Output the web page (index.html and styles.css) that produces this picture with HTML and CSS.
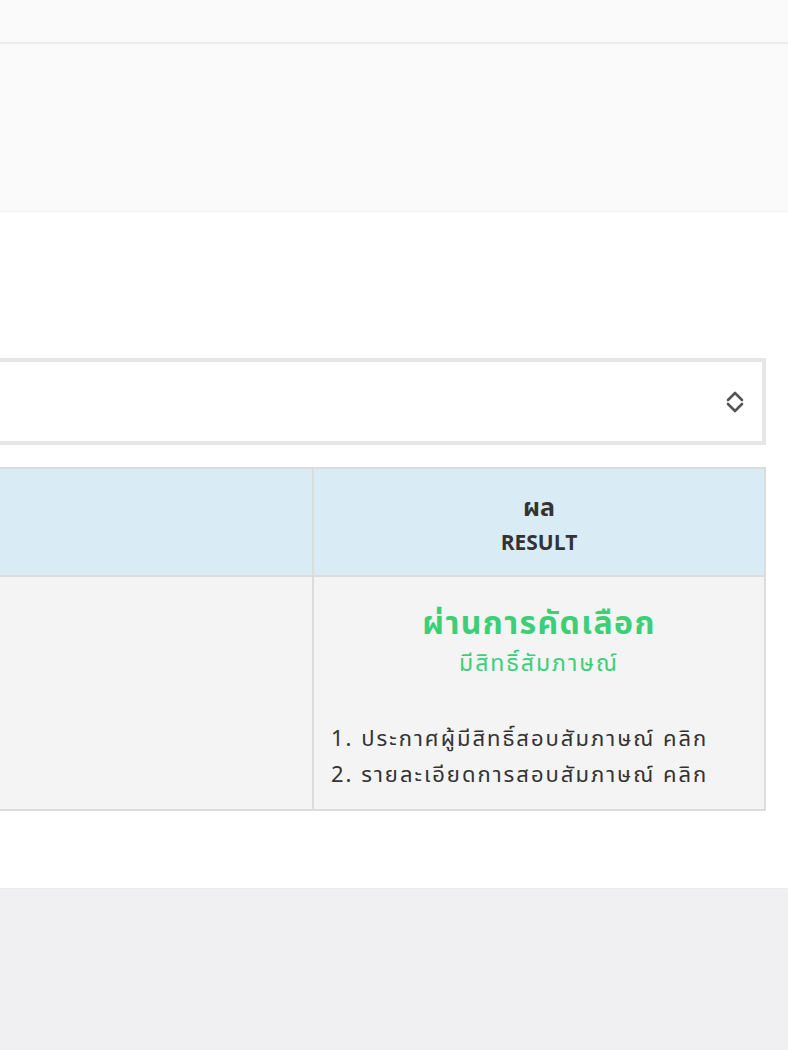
FILE: index.html
```html
<!DOCTYPE html>
<html lang="th">
<head>
<meta charset="utf-8">
<title>ผล</title>
<link rel="stylesheet" href="styles.css">
</head>
<body>
<header class="topbar"></header>
<section class="banner"></section>
<main class="content">
  <div class="select-box">
    <svg class="chevrons" width="20" height="24" viewBox="0 0 20 24" aria-hidden="true">
      <path d="M3 10 L10 3 L17 10" fill="none" stroke="#555" stroke-width="2.6" stroke-linecap="round" stroke-linejoin="round"/>
      <path d="M3 14 L10 21 L17 14" fill="none" stroke="#555" stroke-width="2.6" stroke-linecap="round" stroke-linejoin="round"/>
    </svg>
  </div>
  <table class="result-table">
    <thead>
      <tr>
        <th class="col-a"></th>
        <th class="col-b"><span class="th-main">ผล</span><span class="th-sub">RESULT</span></th>
      </tr>
    </thead>
    <tbody>
      <tr>
        <td class="col-a"></td>
        <td class="col-b">
          <div class="pass">ผ่านการคัดเลือก</div>
          <div class="pass-sub">มีสิทธิ์สัมภาษณ์</div>
          <ol class="links">
            <li>1. ประกาศผู้มีสิทธิ์สอบสัมภาษณ์ คลิก</li>
            <li>2. รายละเอียดการสอบสัมภาษณ์ คลิก</li>
          </ol>
        </td>
      </tr>
    </tbody>
  </table>
</main>
<footer class="footer"></footer>
</body>
</html>
```
FILE: styles.css
```css
* { box-sizing: border-box; }
html, body { margin: 0; padding: 0; }
body {
  background: #ffffff;
  font-family: "Noto Sans Thai", "Noto Sans", "DejaVu Sans", sans-serif;
  color: #333333;
  overflow: hidden;
  width: 788px;
}
.topbar {
  height: 44px;
  background: #fafafa;
  border-bottom: 2px solid #ececec;
}
.banner {
  height: 168px;
  background: #fafafa;
  border-bottom: 1px solid #f3f3f3;
}
.content {
  margin-left: -40px;
  width: 806px;
  padding-top: 146px;
  padding-bottom: 77px;
}
.select-box {
  height: 87px;
  border: 4px solid #e6e6e6;
  background: #ffffff;
  display: flex;
  align-items: center;
  justify-content: flex-end;
  padding-right: 17px;
}
.chevrons { display: block; }
.result-table {
  margin-top: 22px;
  width: 806px;
  border-collapse: collapse;
  border: 2px solid #dcdcdc;
}
.result-table th, .result-table td {
  border: 2px solid #dcdcdc;
  text-align: center;
  padding: 0;
}
.col-a { width: 352px; }
thead th {
  background: #d9ecf6;
  height: 108px;
  vertical-align: middle;
  padding-top: 7px !important;
}
.th-main {
  display: block;
  font-size: 25px;
  font-weight: 700;
  line-height: 36px;
  color: #333;
}
.th-sub {
  display: block;
  font-size: 21px;
  font-weight: 700;
  line-height: 36px;
  color: #333;
}
tbody td {
  background: #f4f4f4;
  height: 234px;
  vertical-align: top;
}
.pass {
  margin-top: 27px;
  font-size: 32px;
  font-weight: 700;
  line-height: 40px;
  letter-spacing: 1.4px;
  color: #3ccf78;
}
.pass-sub {
  font-size: 23px;
  line-height: 40px;
  letter-spacing: 2px;
  color: #3ccf78;
}
.links {
  list-style: none;
  margin: 38px 0 0 0;
  padding: 0 0 0 17px;
  text-align: left;
  font-size: 22px;
  line-height: 36px;
  letter-spacing: 2px;
  color: #333;
}
.footer {
  height: 162px;
  background: #f0f0f2;
  border-top: 1px solid #ececee;
}
```
